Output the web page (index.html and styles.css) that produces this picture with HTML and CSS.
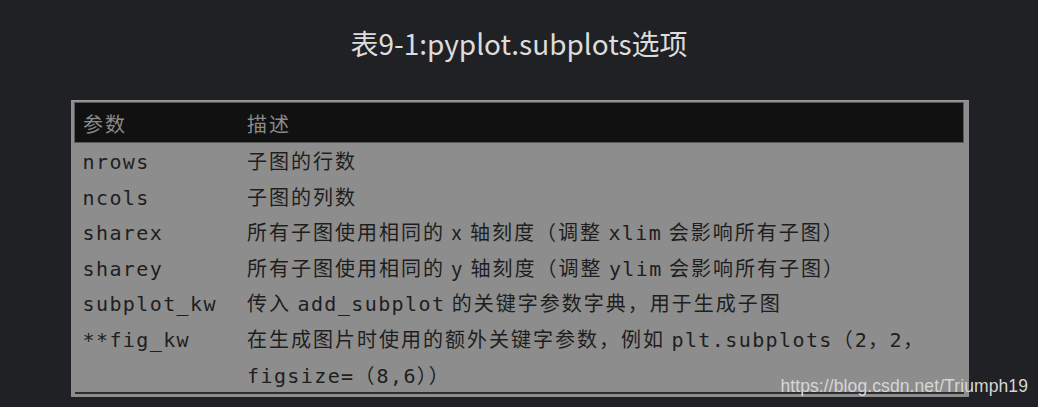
FILE: index.html
```html
<!DOCTYPE html>
<html lang="zh-CN">
<head>
  <meta charset="UTF-8" />
  <title>表9-1:pyplot.subplots选项</title>
  <link rel="stylesheet" href="styles.css">
</head>
<body>

<h1 class="caption">表9-1:pyplot.subplots选项</h1>

<div class="shot">
  <table class="opts">
    <thead>
      <tr><th>参数</th><th>描述</th></tr>
    </thead>
    <tbody>
      <tr><td><code>nrows</code></td><td>子图的行数</td></tr>
      <tr><td><code>ncols</code></td><td>子图的列数</td></tr>
      <tr><td><code>sharex</code></td><td>所有子图使用相同的 x 轴刻度（调整 <code>xlim</code> 会影响所有子图）</td></tr>
      <tr><td><code>sharey</code></td><td>所有子图使用相同的 y 轴刻度（调整 <code>ylim</code> 会影响所有子图）</td></tr>
      <tr><td><code>subplot_kw</code></td><td>传入 <code>add_subplot</code> 的关键字参数字典，用于生成子图</td></tr>
      <tr class="last"><td><code>**fig_kw</code></td><td>在生成图片时使用的额外关键字参数，例如 <code>plt.subplots</code>（<code>2，2，</code><br><code>figsize=</code>（<code>8,6</code>））</td></tr>
    </tbody>
  </table>
  <div class="watermark">https://blog.csdn.net/Triumph19</div>
</div>

</body>
</html>
```

FILE: styles.css
```css
body {
  margin: 0;
  background: #202124;
  font-family: "Noto Sans CJK SC", sans-serif;
}

.caption {
  margin: 0;
  padding-top: 25px;
  height: 100px;
  box-sizing: border-box;
  text-align: center;
  font-size: 28px;
  font-weight: normal;
  line-height: 36px;
  color: #dcdcdc;
}

.shot {
  position: relative;
  margin-left: 71px;
  width: 898px;
  height: 297px;
  box-sizing: border-box;
  padding: 1px 5px 0 3px;
  background: #8d8d8d;
  border-top: 1px solid #9a9a9a;
}

.opts {
  width: 100%;
  border-collapse: collapse;
  font-size: 20px;
  color: #1e1e1e;
}

.opts th {
  background: #111;
  color: #8a8a8a;
  font-weight: normal;
  text-align: left;
  height: 36px;
  padding: 3px 8px 0;
  border-top: 1px solid #5a5a5a;
  border-bottom: 1px solid #5a5a5a;
  letter-spacing: 2px;
  line-height: 34px;
}

.opts th:first-child {
  border-left: 1px solid #5a5a5a;
}

.opts th:last-child {
  border-right: 1px solid #5a5a5a;
}

.opts td {
  height: 35.6px;
  padding: 0 8px;
  vertical-align: middle;
  letter-spacing: 2px;
  line-height: 35.6px;
  white-space: nowrap;
}

.opts th:first-child,
.opts td:first-child {
  width: 148px;
}

.opts tr.last td {
  vertical-align: top;
  border-bottom: 2px solid #2e2e2e;
}

code {
  font-family: "DejaVu Sans Mono", monospace;
  font-size: 20px;
  line-height: 20px;
  letter-spacing: 1.4px;
}

.watermark {
  position: absolute;
  right: -59px;
  bottom: 1px;
  font-family: "Liberation Sans", sans-serif;
  font-size: 17.5px;
  line-height: 20px;
  color: #d6d6d6;
  letter-spacing: 0.1px;
}
```
